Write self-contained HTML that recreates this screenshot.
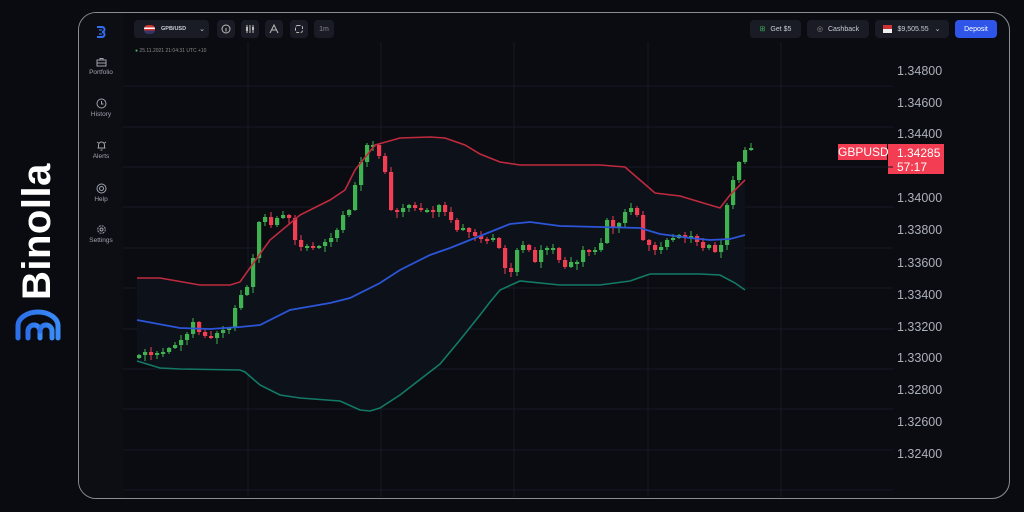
<!DOCTYPE html>
<html><head><meta charset="utf-8"><style>
*{margin:0;padding:0;box-sizing:border-box}
body{width:1024px;height:512px;background:#0a0b10;font-family:"Liberation Sans",sans-serif;position:relative;overflow:hidden;color:#c8ccd6}
.frame{position:absolute;left:78px;top:12px;width:932px;height:487px;border:1.5px solid #8a8d96;border-radius:18px;background:#0b0c11;overflow:hidden}
.side{position:absolute;left:0;top:0;width:44px;height:100%;background:#0d0e14}
.nav{position:absolute;left:0;width:44px;text-align:center;font-size:6.5px;color:#9ea3ad}
.nav svg{display:block;margin:0 auto 2px}
.btn{position:absolute;top:7px;height:18px;background:#1a1c25;border-radius:4px;font-size:7px;color:#c8ccd6;display:flex;align-items:center;justify-content:center}
.lbl{position:absolute;left:818px;font-size:12.5px;color:#aab0ba}
</style></head><body>
<div style="position:absolute;left:15px;top:300px;transform:rotate(-90deg);transform-origin:0 0;font-size:40px;font-weight:bold;color:#fff;letter-spacing:0.5px;width:140px">Binolla</div>
<svg style="position:absolute;left:0;top:0" width="78" height="512">
<defs><linearGradient id="g" x1="0" x2="1"><stop offset="0" stop-color="#2d6fe8"/><stop offset="1" stop-color="#3a8bf5"/></linearGradient></defs>
<g fill="none" stroke="url(#g)" stroke-width="5" stroke-linecap="round">
<path d="M18 338 V326 A20 14 0 0 1 58 326 V338"/>
<path d="M28 338 V331 A6 6 0 0 1 40 331 V338"/>
<path d="M40 331 A6 6 0 0 1 52 331 V338"/>
</g></svg>
<div class="frame">
<div class="side"></div>
<svg style="position:absolute;left:16px;top:13px" width="12" height="12"><path d="M2 1h5a2.5 2.5 0 0 1 0 5a2.5 2.5 0 0 1 0 5H2" fill="none" stroke="#2f6ff0" stroke-width="2"/><path d="M4 4h3M4 8h3" stroke="#2f6ff0" stroke-width="1.3"/></svg>
<div class="nav" style="top:44px"><svg width="11" height="10"><rect x="1" y="3" width="9" height="6" fill="none" stroke="#9ea3ad"/><path d="M4 3V1.5h3V3M1 6h9" stroke="#9ea3ad" fill="none"/></svg>Portfolio</div>
<div class="nav" style="top:85px"><svg width="11" height="11"><circle cx="5.5" cy="5.5" r="4.5" fill="none" stroke="#9ea3ad"/><path d="M5.5 3v3h2" stroke="#9ea3ad" fill="none"/></svg>History</div>
<div class="nav" style="top:127px"><svg width="11" height="11"><path d="M2.5 8V5a3 3 0 0 1 6 0v3zM1.5 8h8M4.5 10h2M1 2l1.5 1M10 2L8.5 3" stroke="#9ea3ad" fill="none"/></svg>Alerts</div>
<div class="nav" style="top:170px"><svg width="11" height="11"><circle cx="5.5" cy="5.5" r="4.5" fill="none" stroke="#9ea3ad"/><circle cx="5.5" cy="5.5" r="2" fill="none" stroke="#9ea3ad"/></svg>Help</div>
<div class="nav" style="top:211px"><svg width="11" height="11"><circle cx="5.5" cy="5.5" r="3.8" fill="none" stroke="#9ea3ad" stroke-dasharray="2 1"/><circle cx="5.5" cy="5.5" r="1.5" fill="none" stroke="#9ea3ad"/></svg>Settings</div>
<div class="btn" style="left:55px;width:75px;justify-content:flex-start;padding-left:10px"><span style="display:inline-block;width:11px;height:9px;border-radius:4px;background:linear-gradient(#c33 0 30%,#fff 30% 45%,#c33 45% 60%,#336 60%)"></span><span style="margin-left:6px;font-size:5.5px;font-weight:bold">GPB/USD</span><span style="margin-left:13px">⌄</span></div>
<div class="btn" style="left:138px;width:18px"><svg width="10" height="10"><circle cx="5" cy="5" r="4" fill="none" stroke="#bbb"/><path d="M5 4v3.5" stroke="#bbb"/></svg></div>
<div class="btn" style="left:162px;width:18px"><svg width="10" height="10"><path d="M2 1v8M5 1v8M8 1v8" stroke="#bbb"/><rect x="1" y="3" width="2" height="4" fill="#bbb"/><rect x="7" y="3" width="2" height="3" fill="#bbb"/></svg></div>
<div class="btn" style="left:186px;width:18px"><svg width="10" height="10"><path d="M1 9L5 1L9 9M3 6h4" stroke="#bbb" fill="none"/></svg></div>
<div class="btn" style="left:211px;width:18px"><svg width="10" height="10"><rect x="1.5" y="1.5" width="7" height="7" rx="2" fill="none" stroke="#bbb" stroke-dasharray="3 1.5"/></svg></div>
<div class="btn" style="left:235px;width:20px;color:#888">1m</div>
<div class="btn" style="left:671px;width:51px"><span style="color:#3bb35a;margin-right:5px">⊞</span>Get $5</div>
<div class="btn" style="left:728px;width:62px"><span style="color:#999;margin-right:5px">◎</span>Cashback</div>
<div class="btn" style="left:796px;width:74px"><span style="display:inline-block;width:9px;height:8px;background:linear-gradient(#c33 0 50%,#eee 50%);margin-right:5px"></span>$9,505.55 <span style="margin-left:6px">⌄</span></div>
<div class="btn" style="left:876px;width:42px;background:#2f55e8;color:#fff">Deposit</div>
<div style="position:absolute;left:56px;top:35px;font-size:5px;color:#888"><span style="color:#3bb35a">●</span> 25.11.2021 21:04:31 UTC +10</div>
<div class="lbl" style="top:51px">1.34800</div>
<div class="lbl" style="top:83px">1.34600</div>
<div class="lbl" style="top:114px">1.34400</div>
<div class="lbl" style="top:178px">1.34000</div>
<div class="lbl" style="top:210px">1.33800</div>
<div class="lbl" style="top:243px">1.33600</div>
<div class="lbl" style="top:275px">1.33400</div>
<div class="lbl" style="top:307px">1.33200</div>
<div class="lbl" style="top:338px">1.33000</div>
<div class="lbl" style="top:370px">1.32800</div>
<div class="lbl" style="top:402px">1.32600</div>
<div class="lbl" style="top:434px">1.32400</div>
<div style="position:absolute;left:759px;top:131px;width:49px;height:16px;background:#f23d52;color:#fff;font-size:12px;text-align:center;line-height:16px">GBPUSD</div>
<div style="position:absolute;left:809px;top:131px;width:56px;height:30px;background:#f23d52;color:#fff;font-size:12px;padding-left:9px;line-height:14px;padding-top:2px">1.34285<br>57:17</div>
</div>
<svg id="c" style="position:absolute;left:0;top:0" width="1024" height="512"></svg>
<script>
var s=document.getElementById('c'),h='';
h+='<defs><clipPath id="k"><rect x="123" y="42" width="770" height="455"/></clipPath></defs><g clip-path="url(#k)">';
[86,127,167,207,248,288,329,369,409,450,490].forEach(function(y){h+='<line x1="123" x2="960" y1="'+y+'" y2="'+y+'" stroke="#161a26"/>'});
[248,381,514,648,781].forEach(function(x){h+='<line y1="42" y2="498" x1="'+x+'" x2="'+x+'" stroke="#161a26"/>'});
function P(a){return a.map(function(p,i){return (i?'L':'M')+p[0]+' '+p[1]}).join('')}
var U=[[137,278],[160,278],[200,285],[230,285],[240,282],[252,265],[270,240],[300,215],[330,200],[345,190],[355,170],[375,145],[400,138],[430,137],[445,138],[465,145],[480,154],[500,162],[520,165],[600,165],[625,167],[640,180],[655,193],[680,196],[700,202],[720,208],[730,195],[745,180]];
var M=[[137,320],[180,328],[210,329],[240,327],[260,325],[290,310],[330,303],[350,298],[380,283],[400,270],[430,255],[450,248],[470,240],[490,232],[510,224],[530,222],[560,226],[600,227],[640,228],[660,234],[690,238],[710,240],[730,239],[745,235]];
var L=[[137,361],[160,368],[180,369],[240,370],[245,372],[260,385],[280,395],[300,398],[340,401],[360,410],[370,411],[380,408],[400,395],[440,364],[460,340],[480,315],[490,302],[500,290],[520,281],[560,285],[600,285],[630,281],[650,274],[700,274],[720,275],[735,283],[745,290]];
h+='<path d="'+P(U)+'L'+P(L.slice().reverse()).slice(1)+'Z" fill="#0c111a"/>';
var C=[355,352,355,353,352,348,345,340,334,322,332,336,338,333,330,328,308,295,287,258,222,217,225,218,215,218,240,247,246,248,246,242,238,230,215,210,185,162,145,145,156,172,210,212,208,205,208,210,210,212,205,212,220,230,228,232,236,239,240,238,248,268,272,250,245,250,262,250,248,248,260,267,262,262,250,252,250,243,220,228,223,212,208,215,240,245,250,247,240,238,235,237,236,242,248,245,252,245,205,180,162,150,148];
var prev=358;
for(var i=0;i<C.length;i++){var x=137+i*6.0,o=prev,c=C[i];var g=c<=o;var col=g?'#3fb34f':'#f23d52';var t=Math.min(o,c),b=Math.max(o,c);if(b-t<2)b=t+2;
var hi=t-1-((i*7)%5),lo=b+1+((i*5)%6);
h+='<line x1="'+(x+2)+'" x2="'+(x+2)+'" y1="'+hi+'" y2="'+lo+'" stroke="'+col+'" stroke-width="1"/><rect x="'+x+'" y="'+t+'" width="4.2" height="'+(b-t)+'" fill="'+col+'"/>';prev=c;}
h+='<path d="'+P(U)+'" fill="none" stroke="#c02a3e" stroke-width="1.6"/>';
h+='<path d="'+P(M)+'" fill="none" stroke="#2c55d8" stroke-width="1.8"/>';
h+='<path d="'+P(L)+'" fill="none" stroke="#137a66" stroke-width="1.6"/>';
h+='</g>';
s.innerHTML=h;
</script>
</body></html>
